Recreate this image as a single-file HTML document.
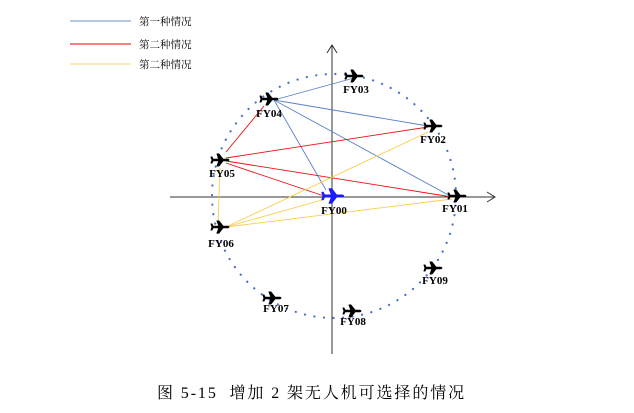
<!DOCTYPE html>
<html><head><meta charset="utf-8"><style>
html,body{margin:0;padding:0;background:#fff;width:634px;height:413px;overflow:hidden}
svg{display:block}
.l{font-family:"Liberation Serif",serif;font-weight:bold;font-size:11px;fill:#000;text-anchor:middle}
.lg{font-family:"Liberation Serif","Noto Serif CJK SC",serif;font-size:10.5px;fill:#000}
</style></head><body>
<svg width="634" height="413" viewBox="0 0 634 413">
<defs>
<path id="p" stroke-width="1" stroke-linejoin="round" d="M-8,-0.8 L-2,-0.8 L-4,-6 L-2,-6 L2,-0.8 L7,-0.8 Q9,0 7,0.8 L2,0.8 L-2,6 L-4,6 L-2,0.8 L-8,0.8 L-9,3 L-10,3 L-9,0 L-10,-3 L-9,-3 Z"/>
</defs>
<line x1="70" y1="21" x2="131" y2="21" stroke="#6a90cf" stroke-width="1"/>
<line x1="70" y1="44" x2="131" y2="44" stroke="#e00" stroke-width="1"/>
<line x1="70" y1="64" x2="131" y2="64" stroke="#f7d56a" stroke-width="1"/>
<text class="lg" x="139" y="25">第一种情况</text>
<text class="lg" x="139" y="48">第二种情况</text>
<text class="lg" x="139" y="68">第二种情况</text>
<line x1="170" y1="197" x2="494" y2="197" stroke="#333" stroke-width="1"/>
<polyline points="487,192 495,197 487,202" fill="none" stroke="#333"/>
<line x1="332" y1="45" x2="332" y2="354" stroke="#333" stroke-width="1"/>
<polyline points="327,53 332,45 337,53" fill="none" stroke="#333"/>
<circle cx="334" cy="196" r="122" fill="none" stroke="#4a72c4" stroke-width="2.2" stroke-dasharray="0.1 9.5" stroke-linecap="round"/>
<g stroke="#5b80c8" stroke-width="0.9">
<line x1="274" y1="100" x2="354" y2="78"/>
<line x1="274" y1="100" x2="428" y2="126"/>
<line x1="274" y1="100" x2="452" y2="197"/>
<line x1="274" y1="100" x2="326" y2="190"/>
</g>
<g stroke="#e81010" stroke-width="0.9">
<line x1="226" y1="152" x2="264" y2="106"/>
<line x1="226" y1="158" x2="428" y2="127"/>
<line x1="226" y1="161" x2="452" y2="197"/>
<line x1="226" y1="163" x2="324" y2="196"/>
</g>
<g stroke="#f9cf4a" stroke-width="0.9">
<line x1="220" y1="168" x2="218" y2="224"/>
<line x1="226" y1="227" x2="428" y2="132"/>
<line x1="226" y1="227" x2="322" y2="200"/>
<line x1="226" y1="227" x2="452" y2="199"/>
</g>
<g transform="translate(334 196) scale(1.2)"><use href="#p" fill="#1a1aff" stroke="#1a1aff"/></g>
<g fill="#000" stroke="#000">
<use href="#p" x="458" y="196"/>
<use href="#p" x="434" y="126"/>
<use href="#p" x="355" y="76"/>
<use href="#p" x="270" y="99"/>
<use href="#p" x="221" y="160"/>
<use href="#p" x="221" y="227"/>
<use href="#p" x="273" y="298"/>
<use href="#p" x="353" y="311"/>
<use href="#p" x="434" y="268"/>
</g>
<text class="l" x="334" y="214">FY00</text>
<text class="l" x="455" y="212">FY01</text>
<text class="l" x="433" y="143">FY02</text>
<text class="l" x="356" y="93">FY03</text>
<text class="l" x="269" y="117">FY04</text>
<text class="l" x="222" y="177">FY05</text>
<text class="l" x="221" y="247">FY06</text>
<text class="l" x="276" y="312">FY07</text>
<text class="l" x="353" y="325">FY08</text>
<text class="l" x="435" y="284">FY09</text>
<text x="157" y="398" style="font-family:'Liberation Serif','Noto Serif CJK SC',serif;font-size:16px;letter-spacing:1.9px">图 5-15&#160; 增加 2 架无人机可选择的情况</text>
</svg>
</body></html>
